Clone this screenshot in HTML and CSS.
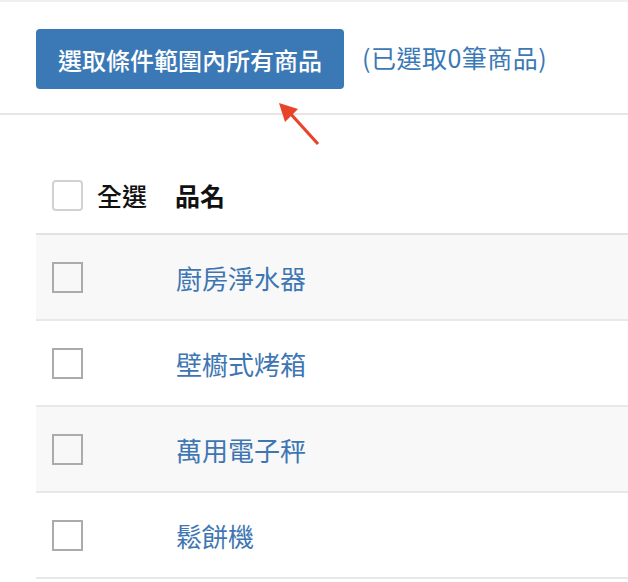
FILE: index.html
```html
<!DOCTYPE html>
<html lang="zh-Hant">
<head>
<meta charset="utf-8">
<link rel="stylesheet" href="styles.css">
</head>
<body>
<div class="page">
  <div class="toolbar">
    <button class="select-all-btn">選取條件範圍內所有商品</button>
    <span class="count">(已選取0筆商品)</span>
    <svg class="arrow" width="50" height="50" viewBox="0 0 50 50">
      <line x1="41" y1="43" x2="12" y2="11" stroke="#e8432b" stroke-width="3.2"/>
      <polygon points="2,2 21,8 8,21" fill="#e8432b"/>
    </svg>
  </div>
  <div class="table">
    <div class="row head">
      <span class="cb cb-head"></span>
      <span class="all">全選</span>
      <span class="name-head">品名</span>
    </div>
    <div class="row alt"><span class="cb"></span><span class="name">廚房淨水器</span></div>
    <div class="row"><span class="cb"></span><span class="name">壁櫥式烤箱</span></div>
    <div class="row alt"><span class="cb"></span><span class="name">萬用電子秤</span></div>
    <div class="row"><span class="cb"></span><span class="name">鬆餅機</span></div>
  </div>
</div>
</body>
</html>
```

FILE: styles.css
```css
html, body {
  margin: 0;
  padding: 0;
  background: #fff;
}
body {
  font-family: "Noto Sans CJK TC", "Noto Sans", sans-serif;
  overflow: hidden;
}
.page {
  border-top: 2px solid #f0f0f4;
}
.toolbar {
  position: relative;
  display: flex;
  align-items: flex-start;
  box-sizing: border-box;
  height: 113px;
  padding: 27px 0 0 36px;
  border-bottom: 2px solid #e6e6e6;
}
.select-all-btn {
  font-family: inherit;
  background: #3b79b6;
  color: #fff;
  border: none;
  border-radius: 4px;
  width: 308px;
  height: 60px;
  font-size: 24px;
  font-weight: 500;
  padding: 0;
}
.count {
  color: #3b79b6;
  font-size: 25px;
  line-height: 56px;
  margin-left: 18px;
  letter-spacing: 0.5px;
}
.arrow {
  position: absolute;
  left: 277px;
  top: 99px;
}
.table {
  margin-left: 36px;
}
.row {
  display: flex;
  align-items: center;
  height: 84px;
  border-bottom: 2px solid #e8e8e8;
  padding-left: 16px;
}
.row.head {
  height: 120px;
  padding-top: 42px;
  box-sizing: border-box;
  border-bottom-color: #e2e2e2;
}
.row.alt {
  background: #f8f8f8;
}
.cb {
  width: 27px;
  height: 27px;
  border: 2px solid #ababab;
  flex: none;
  background: #fff;
}
.alt .cb {
  background: #f8f8f8;
}
.cb-head {
  border: 2px solid #d2d2d2;
  border-radius: 4px;
}
.all {
  font-size: 25px;
  font-weight: 500;
  color: #111;
  margin-left: 14px;
}
.name-head {
  font-size: 25px;
  font-weight: 700;
  color: #111;
  margin-left: 28px;
}
.name {
  font-size: 26px;
  color: #3d76b3;
  margin-left: 93px;
}
```
